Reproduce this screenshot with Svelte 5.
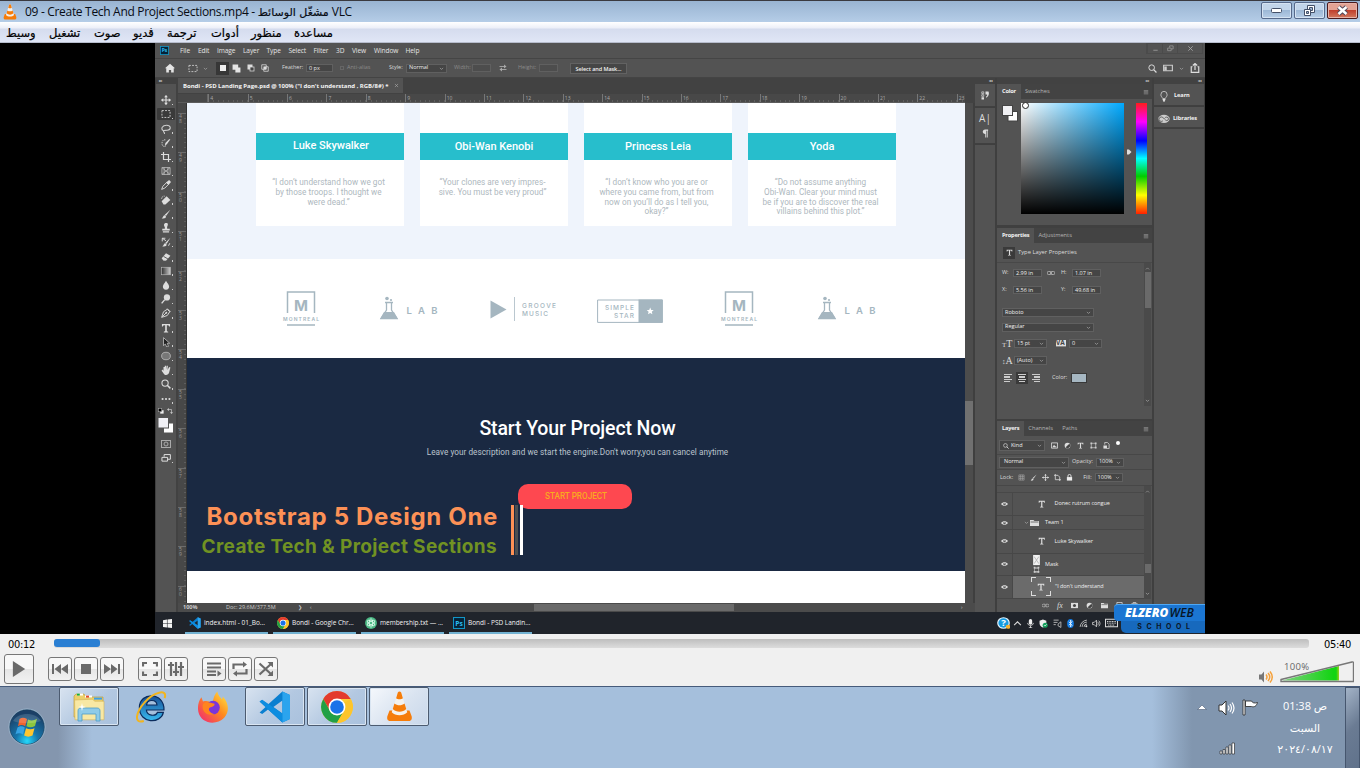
<script>
  const menus = ['وسيط', 'تشغيل', 'صوت', 'ڤديو', 'ترجمة', 'أدوات', 'منظور', 'مساعدة'];
  const menuWidths = [43, 45, 39, 34, 44, 40, 43, 40];

  const psMenu = [['File', 18], ['Edit', 19], ['Image', 26], ['Layer', 23.5], ['Type', 22], ['Select', 25], ['Filter', 22.5], ['3D', 16], ['View', 22], ['Window', 31.5], ['Help', 20]];

  const tools = ['move', 'marquee', 'lasso', 'quick', 'crop', 'frame', 'dropper', 'heal', 'brush', 'stamp', 'history', 'eraser', 'gradient', 'blur', 'dodge', 'pen', 'type', 'select', 'ellipse', 'hand', 'zoom', 'dots'];

  const team = [
    { name: 'Luke Skywalker', up: true, lines: ['“I don’t understand how we got', 'by those troops. I thought we', 'were dead.”'] },
    { name: 'Obi-Wan Kenobi', lines: ['“Your clones are very impres-', 'sive. You must be very proud”'] },
    { name: 'Princess Leia', lines: ['“I don’t know who you are or', 'where you came from, but from', 'now on you’ll do as I tell you,', 'okay?”'] },
    { name: 'Yoda', lines: ['“Do not assume anything', 'Obi-Wan. Clear your mind must', 'be if you are to discover the real', 'villains behind this plot.”'] }
  ];

  const logos = [['montreal', 96], ['lab', 111], ['groove', 107], ['star', 124], ['montreal', 96], ['lab', 66]];
  const hTicks = Array.from({ length: 20 }, (_, i) => i + 4);
  const vTicks = Array.from({ length: 13 }, (_, i) => String(i + 48));

  const layers = [
    { h: 23, icon: 'type', pad: 25, label: 'Donec rutrum congue' },
    { h: 14, icon: 'folder', pad: 11, label: 'Team 1', group: true },
    { h: 23.5, icon: 'type', pad: 25, label: 'Luke Skywalker' },
    { h: 22.5, icon: 'mask', pad: 19, label: 'Mask' },
    { h: 22.5, icon: 'type', pad: 18, label: '"I don\'t understand', active: true }
  ];

  const psTasks = [['vscode', 'index.html - 01_Bo...'], ['chrome', 'Bondi - Google Chr...'], ['atom', 'membership.txt — ...'], ['ps', 'Bondi - PSD Landin...']];
  const tray = [['help', 15], ['up', 12], ['mic', 14], ['shield', 13], ['music', 14], ['bt', 13], ['wifi', 12], ['sound', 14], ['kbd', 17]];

  const dockItems = [['explorer', true], ['ie', false], ['firefox', false], ['vscode', true], ['chrome', true], ['cone', true]];
  const controls = [
    ['prev', 48], ['stop', 2], ['next', 2], ['full', 14], ['eq', 2], ['list', 14], ['loop', 2], ['shuffle', 2]
  ];

  // 16 x 16 glyphs
  const g = {
    move: '<path d="M8 1v14M1 8h14" stroke="#ddd" stroke-width="1.8"/><path d="M8 0l3 3.6H5zM8 16l3-3.6H5zM0 8l3.6-3v6zM16 8l-3.6-3v6z" fill="#ddd"/>',
    marquee: '<path d="M1.5 2.500h13v11h-13z" fill="none" stroke="#ccc" stroke-width="1.5" stroke-dasharray="3 2"/>',
    lasso: '<path d="M4 11C-1 8 2 2 9 2s8 7 1 8c-3 .6-6-.5-6 1.500S7 14 5 16" fill="none" stroke="#ccc" stroke-width="1.700"/>',
    quick: '<path d="M7 3c-5-1-6 4-5 8 1 3 4 3 6 2" fill="none" stroke="#ccc" stroke-width="1.500" stroke-dasharray="2 1.500"/><path d="M15 2l-5 7-4 4 1-5 6-6z" fill="#ddd"/>',
    crop: '<path d="M4 0v12h12M0 4h12v12" fill="none" stroke="#ddd" stroke-width="1.900"/>',
    frame: '<path d="M1.500 2.500h13v11h-13zM1.500 2.500l13 11M14.500 2.500l-13 11M5 2v12M11 2v12" fill="none" stroke="#bbb" stroke-width="1.300"/>',
    dropper: '<path d="M1 15l2-5 6-6 3 3-6 6z" fill="none" stroke="#ddd" stroke-width="1.500"/><path d="M8 4l5-4 3 3-4 5z" fill="#ddd"/>',
    heal: '<path d="M1 10l8-8 6 6-8 7H4z" fill="#ddd"/><path d="M1 6c0-3 3-5 5-4" fill="none" stroke="#ccc" stroke-dasharray="2 1" stroke-width="1.500"/>',
    brush: '<path d="M15 1L6 9l2 2zM6 10c-3 0-2 4-5 5 5 1 7-1 7-3z" fill="#ddd"/>',
    stamp: '<path d="M6 9C7 6 4 5 5 2s6-3 6 0-2 4-1 7h4v3H2V9zM3 13h10v2H3z" fill="#ddd"/>',
    history: '<path d="M15 1L7 9l2 2zM7 10c-3 0-2 4-5 5 5 1 7-1 7-3z" fill="#ddd"/><path d="M2 7V2h5M2 2l6 4M12 14l2-4" fill="none" stroke="#ddd" stroke-width="1.500"/>',
    eraser: '<path d="M1 10l7-8 7 4-7 8H4z" fill="#ddd"/><path d="M4 7l7 4M2 15h13" stroke="#555" stroke-width="1.500"/>',
    gradient: '<rect x="1" y="2" width="14" height="12" fill="url(#grayFade)" stroke="#bbb"/>',
    blur: '<path d="M8 1c2 4 5 6 5 9.500a5 5 0 01-10 0C3 7 6 5 8 1z" fill="#ddd"/>',
    dodge: '<circle cx="9.500" cy="5.500" r="5" fill="#ddd"/><path d="M6 9l-5 6" stroke="#ddd" stroke-width="2.200"/>',
    pen: '<path d="M1 15l3-9 6-4 4 4-4 6zM2 14l6-6M10 1l5 5" fill="none" stroke="#ddd" stroke-width="1.500"/><circle cx="8.500" cy="7.500" r="1.500" fill="#ddd"/>',
    type: '<path d="M1.500 1.500h13v4H13C12.700 3.600 12 3.500 9.300 3.500v9c0 1 .7 1.200 2.200 1.300v1.200h-7v-1.200c1.500-.1 2.200-.3 2.200-1.300v-9C4 3.500 3.300 3.600 3 5.500H1.500z" fill="#ddd"/>',
    select: '<path d="M4 1v13l3-3 2 5 3-1-2-5h4z" fill="#222" stroke="#bbb" stroke-width="1.300"/>',
    ellipse: '<ellipse cx="8" cy="8" rx="7" ry="6" fill="#777" stroke="#bbb" stroke-width="1.300"/>',
    hand: '<path d="M4 9V3h2v4V1h2v6l1-6h2l-.5 7L13 3l2 1-2 8c-1 5-8 5-9 1L1 9l1-2z" fill="#ddd"/>',
    zoom: '<circle cx="6.500" cy="6.500" r="5" fill="none" stroke="#ddd" stroke-width="1.700"/><path d="M10 10l5 5" stroke="#ddd" stroke-width="2.300"/>',
    dots: '<circle cx="2.500" cy="8" r="1.700" fill="#ddd"/><circle cx="8" cy="8" r="1.700" fill="#ddd"/><circle cx="13.500" cy="8" r="1.700" fill="#ddd"/>',
    home: '<path d="M8 1l8 7.500h-2V15H9.800v-4H6.200v4H2V8.500H0z" fill="#e4e4e4"/>',
    chev: '<path d="M3 6l5 5 5-5" fill="none" stroke="#bbb" stroke-width="1.900"/>',
    chevUp: '<path d="M3 11l5-5 5 5" fill="none" stroke="#aaa" stroke-width="1.900"/>',
    op1: '<rect x="2" y="2" width="12" height="12" fill="#eee"/>',
    op2: '<path d="M1 1h10v5h4v9H6v-5H1z" fill="#e4e4e4"/>',
    op3: '<path d="M1 1h10v5H6v5H1z" fill="#ddd"/><rect x="6" y="6" width="8" height="8" fill="#444" stroke="#ddd" stroke-width="1.500"/>',
    op4: '<path d="M1.500 1.500h9v9h-9zM5.500 5.500h9v9h-9z" fill="none" stroke="#ddd" stroke-width="1.500"/><rect x="6" y="6" width="4.500" height="4.500" fill="#ddd"/>',
    defaults: '<rect x="6" y="6" width="9" height="9" fill="#eee"/><rect x="1" y="1" width="9" height="9" fill="#000" stroke="#aaa" stroke-width="1.500"/>',
    turn: '<path d="M3 4h9v9" fill="none" stroke="#ccc" stroke-width="1.800"/><path d="M5 0v8L0 4zM8 11h8l-4 5z" fill="#ccc"/>',
    swap: '<path d="M1 5h10M15 11H5" stroke="#aaa" stroke-width="1.800"/><path d="M10 1l5 4-5 4zM6 7l-5 4 5 4z" fill="#aaa"/>',
    space: '<path d="M1 2.500h14v11H1z" fill="none" stroke="#ccc" stroke-width="1.800"/><rect x="2" y="5" width="4" height="8" fill="#ccc"/>',
    share: '<path d="M4 6H2v9h12V6h-2M8 11V1M4.500 4L8 .8 11.500 4" fill="none" stroke="#ddd" stroke-width="1.900"/>',
    min: '<path d="M3 12h10" stroke="#999" stroke-width="2"/>',
    restore: '<path d="M1.500 7h8v6h-8zM6 6V2h8v7h-4" fill="none" stroke="#999" stroke-width="1.800"/>',
    screens: '<path d="M1.500 7h9v6h-9zM5 6V2.500h10V10h-4" fill="none" stroke="#ddd" stroke-width="1.600"/>',
    close: '<path d="M3 3l10 10M13 3L3 13" stroke="#aaa" stroke-width="1.900"/>',
    histPanel: '<path d="M1.500 1.500h4v3h-4zM1.500 6.500h4v3h-4z" fill="none" stroke="#ccc" stroke-width="1.500"/><path d="M1 11h5v4H1zM9 1h6c2 5 0 9-5 11v-2c2-1 3-3 2-4H9z" fill="#ddd"/>',
    para: '<path d="M14 1v2h-1v12h-2V3H9.500v12h-2V9C0 9 0 1 7 1z" fill="#ddd"/>',
    bulb: '<path d="M6 11C5 9 3 8 3 5.500a5 5 0 0110 0C13 8 11 9 10 11z" fill="none" stroke="#ccc" stroke-width="1.300"/><path d="M5.500 11.500h5L9 15.500H7z" fill="#ddd"/>',
    cc: '<ellipse cx="8" cy="8.500" rx="7.600" ry="6" fill="#ccc"/><path d="M6.500 11.500a3.200 3.200 0 110-5c1.500 1 3 4 5 4.500a2.500 2.500 0 100-5c-1 0-2 .5-2.500 1.500" fill="none" stroke="#555" stroke-width="1.200"/>',
    panelMenu: '<path d="M2 4h12M2 7h12M2 10h12M2 13h12" stroke="#999" stroke-width="1.600"/>',
    link: '<path d="M7 5H3a3 3 0 000 6h4zM9 5h4a3 3 0 010 6H9z" fill="none" stroke="#bbb" stroke-width="1.600"/>',
    img: '<path d="M1 2h14v12H1z" fill="none" stroke="#ddd" stroke-width="1.900"/><path d="M3 12l4-6 3 4 1-1 2 3z" fill="#ddd"/>',
    adj: '<circle cx="8" cy="8" r="6.500" fill="#ddd"/><path d="M8 2a6 6 0 010 12z" fill="#444" transform="rotate(45 8 8)"/>',
    shape: '<path d="M3 3h10v10H3z" fill="none" stroke="#ccc" stroke-width="1.500"/><path d="M1 1h4v4H1zM11 1h4v4h-4zM1 11h4v4H1zM11 11h4v4h-4z" fill="#ccc"/>',
    smart: '<path d="M4 6V1h6l4 4v10H8" fill="none" stroke="#ddd" stroke-width="1.700"/><rect x="1" y="8" width="8" height="7" fill="#ddd"/>',
    checker: '<path d="M2 2h12v12H2zM2 6h12M2 10h12M6 2v12M10 2v12" fill="none" stroke="#aaa" stroke-width="1.300"/>',
    art: '<path d="M3 0v13h13M0 3h9l4 4v9" fill="none" stroke="#ddd" stroke-width="1.800"/>',
    lock: '<rect x="2" y="7" width="12" height="8" fill="#eee"/><path d="M4.500 7V4.500a3.500 3.500 0 017 0V7" fill="none" stroke="#eee" stroke-width="2"/>',
    eye: '<path d="M0 8c4-6.500 12-6.500 16 0-4 6.500-12 6.500-16 0z" fill="#ddd"/><circle cx="8" cy="8" r="3" fill="#535353"/><circle cx="8" cy="7.500" r="1.200" fill="#ddd"/>',
    folder: '<path d="M0 2h6l2 2h8v10H0z" fill="#ddd"/><path d="M1 6h14" stroke="#555" stroke-width="1.500"/>',
    mask: '<path d="M2 0h12v9H2z" fill="#f2f2f2"/><path d="M4 1.500l8 6M12 1.500l-8 6" stroke="#bbb"/><path d="M4.500 11.500h7v3.500h-7z" fill="none" stroke="#ccc"/><path d="M3 10.500h3v1.500H3zM10 10.500h3v1.500h-3zM3 14.300h3v1.500H3zM10 14.300h3v1.500h-3z" fill="#ccc"/>',
    maskBtn: '<rect x="0" y="2" width="16" height="12" fill="#ddd"/><circle cx="8" cy="8" r="3.500" fill="#444"/>',
    newL: '<path d="M2 1h12v13H2z" fill="none" stroke="#ddd" stroke-width="1.800"/>',
    trash: '<path d="M1 4h14M5 3V1h6v2M3 5l1 10h8l1-10" fill="none" stroke="#ddd" stroke-width="1.800"/>',
    win: '<path d="M0 2l7-1v6.500H0zM8 .9L16 0v7.500H8zM0 8.500h7V15l-7-1zM8 8.500h8V16l-8-1z" fill="#f4f4f4"/>',
    vscode: '<path d="M11.700.3L15.500 2v12l-3.800 1.700L4.500 9.200 1.600 11.500.3 10.800 3.300 8 .3 5.200l1.300-.7 2.900 2.300zM11.700 4.800L7.200 8l4.500 3.200z" fill="#0a7fd0" fill-rule="evenodd"/><path d="M.3 5.200l1.300-.8L11.700 11.300V15.700L.3 5.200z" fill="#0d8de0"/><path d="M11.700.3L15.500 2v12l-3.800 1.700z" fill="#2ba4ee"/>',
    chrome: '<circle cx="8" cy="8" r="7.900" fill="#fc3"/><path d="M1.150 4.050A7.900 7.900 0 0114.850 4H8a4 4 0 00-3.460 6z" fill="#e33b2e"/><path d="M1.150 4.050A7.900 7.900 0 008 15.900L11.460 10 8 12a4 4 0 01-3.460-2z" fill="#22a045"/><path d="M8 15.900L11.460 10A4 4 0 0011.460 6L14.850 4A7.900 7.900 0 018 15.900z" fill="#fdc52c"/><circle cx="8" cy="8" r="4.200" fill="#fff"/><circle cx="8" cy="8" r="3.400" fill="#1a73e8"/>',
    cone: '<path d="M.8 13l1.300-3h11.800l1.300 3c.5 2-.8 2.500-2 2.500H2.800c-1.200 0-2.500-.5-2-2.500z" fill="#f57c0a"/><path d="M3.400 11L7 .8C7.500 0 8.500 0 9 .8L12.600 11c-2 2-7.200 2-9.200 0z" fill="#f4f1ec"/><path d="M6 3.700L7 .8C7.500 0 8.500 0 9 .8l1 2.900c-1 .8-3 .8-4 0zM5 6.400c1.700 1.200 4.300 1.200 6 0l1 2.900c-2.100 1.800-5.900 1.800-8 0z" fill="#f57c0a"/>',
    atom: '<circle cx="8" cy="8" r="7.900" fill="#4bb985"/><g fill="none" stroke="#e6fff2" stroke-width="1"><ellipse cx="8" cy="8" rx="2.300" ry="5.800"/><ellipse cx="8" cy="8" rx="2.300" ry="5.800" transform="rotate(60 8 8)"/><ellipse cx="8" cy="8" rx="2.300" ry="5.800" transform="rotate(-60 8 8)"/></g>',
    ps: '<rect x=".7" y=".7" width="14.600" height="14.600" fill="#062236" stroke="#1395c6" stroke-width="1.400"/><text x="8" y="11.500" font-family="Open Sans, sans-serif" font-weight="700" font-size="9" fill="#2bbcf2" text-anchor="middle">Ps</text>',
    help: '<circle cx="8" cy="8" r="7.800" fill="#e8f6ff"/><circle cx="8" cy="8" r="6.300" fill="#169be2"/><text x="8" y="12.500" font-family="Open Sans, sans-serif" font-weight="700" font-size="12" fill="#fff" text-anchor="middle">?</text><circle cx="13.500" cy="13" r="2.800" fill="#f8b230"/>',
    up: '<path d="M2 11l6-6 6 6" fill="none" stroke="#ddd" stroke-width="1.800"/>',
    mic: '<rect x="5" y="0" width="6" height="10" rx="3" fill="#eee"/><path d="M3 7c0 6 10 6 10 0M8 12v4M5 15.500h6" fill="none" stroke="#ddd" stroke-width="1.500"/>',
    shield: '<path d="M7 1l6 2v5c0 4-3 6-6 7-3-1-6-3-6-7V3z" fill="#eee"/><circle cx="11" cy="11" r="4.500" fill="#12a05c"/><path d="M9 11l1.500 1.500L13.500 9.500" stroke="#fff" fill="none" stroke-width="1.300"/>',
    music: '<path d="M1 2h9M1 6h7M1 10h4M9 9l5-4v10l-5-3z" fill="none" stroke="#bbb" stroke-width="1.600"/>',
    bt: '<ellipse cx="8" cy="8" rx="6" ry="8" fill="#1279e0"/><path d="M5 5l6 6-3 3V2l3 3-6 6" fill="none" stroke="#fff" stroke-width="1.300"/>',
    wifi: '<path d="M2 14A13 13 0 0114 2M5.500 14A9 9 0 0114 5.500M9 14a5 5 0 015-5" fill="none" stroke="#bbb" stroke-width="1.700"/><circle cx="13" cy="13" r="1.800" fill="#ddd"/>',
    sound: '<path d="M1 6h3l4-4v12l-4-4H1zM10 5c1.500 2 1.500 4 0 6M12 3c3 3 3 7 0 10" fill="none" stroke="#ccc" stroke-width="1.500"/>',
    kbd: '<path d="M.5 3h15v10H.5z" fill="none" stroke="#ddd" stroke-width="1.400"/><path d="M2.500 6h11M2.500 8.200h11M4 10.800h8" stroke="#ddd" stroke-width="1.200" stroke-dasharray="1.300 .7"/>',
    play: '<path d="M1 0l14 8-14 8z" fill="#6a6a6a"/>',
    prev: '<path d="M0 3h2v10H0zM9 3v10L2.500 8zM16 3v10L9 8z" fill="#6a6a6a"/>',
    next: '<path d="M14 3h2v10h-2zM7 3v10l6.500-5zM0 3v10l7-5z" fill="#6a6a6a"/>',
    stop: '<path d="M3 3h10v10H3z" fill="#6a6a6a"/>',
    full: '<path d="M1 5.500V2h4M11 2h4v3.500M15 10.500V14h-4M5 14H1v-3.500" fill="none" stroke="#6a6a6a" stroke-width="2.200"/>',
    eq: '<path d="M3 1v14M8 1v14M13 1v14" stroke="#6a6a6a" stroke-width="2.200"/><path d="M0 4h6M5 11h6M10 6h6" stroke="#6a6a6a" stroke-width="2.200"/>',
    list: '<path d="M1 2.500h14M1 6.500h14M1 10.500h9M1 14h9" stroke="#6a6a6a" stroke-width="2"/><path d="M11.500 9.500l4 3-4 3z" fill="#6a6a6a"/>',
    loop: '<path d="M1.500 8V3.500h10M14.500 8v4.500h-10" fill="none" stroke="#6a6a6a" stroke-width="2.200"/><path d="M11 .5l4 3-4 3zM5 9.500l-4 3 4 3z" fill="#6a6a6a"/>',
    shuffle: '<path d="M1.500 2.500l12 11M1.500 13.500l12-11" stroke="#6a6a6a" stroke-width="2.200"/><path d="M9.500 1H15v5.500zM9.500 15H15V9.500z" fill="#6a6a6a"/>',
    explorer: '<path d="M.5 2.500l1-1h4l1 1.500H15v10H.5z" fill="#ecd06c" stroke="#b99431" stroke-width=".3"/><path d="M2 1.300h3v1H2zM6 2.300h3.500v1H6z" fill="#fff"/><path d="M2 1.300h1.400v1H2z" fill="#16ab39"/><path d="M6.500 2.300h1.500v1H6.500z" fill="#e44e2b"/><path d="M10.500 3.300h4v1h-4z" fill="#3c9fe8"/><path d="M.8 4.500l9-.4 1 1H15.500v9.300H1z" fill="#f8e8a4" stroke="#d2b257" stroke-width=".3"/><path d="M2.500 15V10c0-1 .5-1.500 1.500-1.500h8c1 0 1.500.5 1.500 1.500v5h-2v-3.500h-7V15z" fill="#8fcbe8" stroke="#4d9cc8" stroke-width=".4"/><path d="M4.500 6l.4 1.600 1.600.4-1.600.4-.4 1.600-.4-1.600L2.500 8l1.600-.4z" fill="#fff"/>',
    ie: '<path d="M14.500 9.500H5.700c.2 3 4.600 3.400 5.500 1.200h3C13 16.500 2.200 16.600 2.200 8.300 2.200.2 14.800.3 14.500 9.500zM5.800 7h5.200C10.800 4 6 4 5.800 7z" fill="url(#ieBlue)" stroke="#0b2b5c" stroke-width=".6"/><path d="M14.800 3.600C16.600-1.500 9 .6 4.700 5.800.7 10.300-1 16.600 4.400 15" fill="none" stroke="#f2b51f" stroke-width="1"/>',
    firefox: '<path d="M10.200.2c.3 2.200 1.500 2.700 2.200 4 .3-.5.500-1 .5-1.500 3 3 3.500 7.800.7 10.700C9.500 17.500 2 16.300.7 10.500.1 7.600.8 5 2.200 3.100L3 5.200C4.800 4.700 6.300 5 7.300 6c1-.2.500-3.500 2.900-5.800z" fill="url(#fox)"/><circle cx="8" cy="8.300" r="3.400" fill="#7b35d9"/><path d="M3 6.500c2-1.700 3.700-.4 5.500-.2.800.2 0 1.700-1.700 1.800-1.600.3-1 2.800 2 3.500-4 1.300-6.800-1.800-5.800-5.100z" fill="#ff841f"/>'
  };
</script>

{#snippet icon(name, w, h = w)}
  <svg class="i" width={w} height={h} viewBox="0 0 16 16" preserveAspectRatio="none">{@html g[name]}</svg>
{/snippet}

{#snippet drop(text, w)}
  <div class="drop" style:width="{w}px"><span>{text}</span>{@render icon('chev', 5)}</div>
{/snippet}

{#snippet logo(kind)}
  {#if kind === 'montreal'}
    <svg width="36" height="36" viewBox="0 0 36 36"><path d="M4.500 22V1h27v21M4 34h28" fill="none" stroke="#a5b6c0" stroke-width="1.500" /><text x="18" y="19.500" class="mont" font-size="15" font-weight="700" text-anchor="middle">M</text><text x="0" y="29.500" class="mont" font-size="5" font-weight="600" textLength="36">MONTREAL</text></svg>
  {:else if kind === 'lab'}
    <svg width="60" height="36" viewBox="0 0 60 36"><path d="M6 11.500h8M7.500 12v7L2 27.500h16L12.500 19v-7" fill="none" stroke="#a5b6c0" stroke-width="1.300" /><path d="M5 21h10l4 7H1z" fill="#a5b6c0" /><circle cx="8" cy="7.500" r="1.800" fill="#a5b6c0" /><circle cx="12" cy="9" r="1.100" fill="#a5b6c0" /><text x="27.500" y="22.500" class="mont" font-size="9.500" font-weight="600" textLength="31">LAB</text></svg>
  {:else if kind === 'groove'}
    <svg width="68" height="36" viewBox="0 0 68 36"><path d="M.5 9.500l16 9-16 9z" fill="#a5b6c0" /><path d="M24.500 6v24" stroke="#bac7cf" /><text x="32" y="17" class="mont" font-size="6.500" font-weight="500" textLength="34">GROOVE</text><text x="32" y="25" class="mont" font-size="6.500" font-weight="500" textLength="26">MUSIC</text></svg>
  {:else}
    <svg width="67" height="36" viewBox="0 0 67 36"><path d="M.6 9h64.800v22.400H.6z" fill="none" stroke="#a5b6c0" /><path d="M41.500 8.500h24v23.300h-24z" fill="#a5b6c0" /><path d="M53.200 16.600l1 2.300 2.500.2-1.900 1.600.6 2.500-2.200-1.300-2.200 1.300.6-2.500-1.900-1.600 2.500-.2z" fill="#fff" /><text x="8" y="19" class="mont" font-size="6.500" font-weight="500" textLength="29">SIMPLE</text><text x="17" y="26.500" class="mont" font-size="6.500" font-weight="500" textLength="20">STAR</text></svg>
  {/if}
{/snippet}

<svg class="defs" width="0" height="0">
  <defs>
    <linearGradient id="grayFade"><stop stop-color="#333" /><stop offset="1" stop-color="#ccc" /></linearGradient>
    <linearGradient id="ieBlue" x2="0" y2="1"><stop stop-color="#174f96" /><stop offset="1" stop-color="#39baf0" /></linearGradient>
    <linearGradient id="fox" x1="1" x2="0" y2="1"><stop stop-color="#fff04a" /><stop offset=".45" stop-color="#ff8a1e" /><stop offset="1" stop-color="#f0207a" /></linearGradient>
    <linearGradient id="vol"><stop stop-color="#7fd07f" /><stop offset=".9" stop-color="#12d412" /><stop offset=".95" stop-color="#12d412" /><stop offset="1" stop-color="#9fce20" /></linearGradient>
    <radialGradient id="orb" cx=".5" cy=".9" r=".8"><stop stop-color="#25d9fb" /><stop offset=".4" stop-color="#1676ac" /><stop offset="1" stop-color="#1b3f66" /></radialGradient>
  </defs>
</svg>

<div class="screen">
  <header class="title">
    {@render icon('cone', 14, 16)}
    <span class="caption">09 - Create Tech And Project Sections.mp4 - <b>مشغّل الوسائط</b> VLC</span>
    <div class="winbtns">
      <i><svg width="12" height="6"><rect x=".5" y=".5" width="10" height="4" rx="1" fill="#fff" stroke="#445068" /></svg></i>
      <i><svg width="14" height="12"><path d="M4.500.5h7v7h-7z" fill="#fff" stroke="#445068" /><path d="M6.500 2.500h3v3h-3z" fill="#9fb6d2" stroke="#445068" /><path d="M1.500 4.500h6v6h-6z" fill="#fff" stroke="#445068" /><path d="M3.500 6.500h2v2h-2z" fill="#9fb6d2" stroke="#445068" /></svg></i>
      <i class="x"><svg width="13" height="11" viewBox="0 0 13 11"><path d="M2.500 2l8 7M10.500 2l-8 7" stroke="#50495b" stroke-width="4.500" /><path d="M2.500 2l8 7M10.500 2l-8 7" stroke="#fff" stroke-width="2.500" /></svg></i>
    </div>
  </header>
  <nav class="menubar">
    {#each menus as m, i}<span style:width="{menuWidths[i]}px">{m}</span>{/each}
  </nav>

  <main class="video">
    <div class="ps">
      <div class="psmenu">
        <div class="pslogo">{@render icon('ps', 9)}</div>
        {#each psMenu as [t, w]}<span style:width="{w}px">{t}</span>{/each}
        <div class="pswin"><i>{@render icon('min', 7)}</i><i>{@render icon('restore', 7)}</i><i>{@render icon('close', 7)}</i></div>
      </div>
      <div class="options">
        <div class="o home">{@render icon('home', 10)}</div>
        <div class="o mq">{@render icon('marquee', 10, 9)}{@render icon('chev', 5)}</div>
        <div class="ops"><i class="on">{@render icon('op1', 8)}</i><i>{@render icon('op2', 9)}</i><i>{@render icon('op3', 8)}</i><i>{@render icon('op4', 8)}</i></div>
        <span class="lbl" style="width:24px">Feather:</span><span class="field" style="width:27px">0 px</span>
        <span class="dim aa"><i></i>Anti-alias</span>
        <span class="lbl" style="width:17px">Style:</span>{@render drop('Normal', 41)}
        <span class="dim w">Width:</span><span class="field off"></span>
        <div class="sw">{@render icon('swap', 8)}</div>
        <span class="dim h">Height:</span><span class="field off"></span>
        <span class="mask">Select and Mask...</span>
        <div class="oright">{@render icon('zoom', 9)}{@render icon('space', 10, 8)}{@render icon('chev', 5)}{@render icon('share', 10)}</div>
      </div>

      <div class="work">
        <div class="tools">
          <div class="strip">▸▸</div>
          <div class="grip"></div>
          {#each tools as t}<div class="tool" class:on={t === 'marquee'}>{@render icon(t, 10)}<u></u></div>{/each}
          <div class="mini">{@render icon('defaults', 6)}{@render icon('turn', 6)}</div>
          <svg width="21" height="18"><rect x="7.500" y="6" width="10" height="10" fill="#fff" stroke="#555" /><rect x="2" y=".5" width="10.500" height="10.500" fill="#f1f1f6" stroke="#555" /></svg>
          <div class="tool qm"><svg width="11" height="9"><rect x=".5" y=".5" width="9" height="7" fill="none" stroke="#aaa" /><circle cx="5" cy="4" r="2" fill="none" stroke="#aaa" /></svg></div>
          <div class="tool">{@render icon('screens', 10)}<u></u></div>
        </div>

        <div class="doc">
          <div class="tabs"><div class="tab"><b>Bondi - PSD Landing Page.psd @ 100% ("I don't understand , RGB/8#) *</b>{@render icon('close', 5)}</div></div>
          <div class="hruler"><i></i>{#each hTicks as n}<span>{n}</span>{/each}</div>
          <div class="mid">
            <div class="vruler">{#each vTicks as n}<span>{n[0]}<br />{n[1]}</span>{/each}</div>
            <div class="canvas">
              <section class="team">
                {#each team as p}
                  <article><h4 class:up={p.up}>{p.name}</h4><p>{#each p.lines as l}<span>{l}</span>{/each}</p></article>
                {/each}
              </section>
              <section class="logos">{#each logos as [k, w]}<div style:width="{w}px">{@render logo(k)}</div>{/each}</section>
              <section class="cta">
                <h2>Start Your Project Now</h2>
                <p>Leave your description and we start the engine.Don't worry,you can cancel anytime</p>
                <button>START PROJECT</button>
              </section>
              <div class="lower">
                <div><strong>Bootstrap 5 Design One</strong><em>Create Tech &amp; Project Sections</em></div>
                <i class="b1"></i><i class="b2"></i><i class="b3"></i>
              </div>
            </div>
            <div class="vscroll"><i></i></div>
          </div>
          <div class="status"><b>100%</b><span>Doc: 29.6M/377.5M</span><small>❯</small><small class="prev">‹</small><i></i><small class="next">›</small></div>
        </div>

        <div class="dock narrow">
          <div class="strip">◂◂</div>
          <div class="blk" style="height:23px">{@render icon('histPanel', 8, 9)}</div>
          <div class="blk two" style="height:36px"><b>A|</b>{@render icon('para', 7, 9)}</div>
          <div class="rest"></div>
        </div>

        <div class="dock panels">
          <div class="strip">▸▸</div>
          <div class="ptabs"><b>Color</b><span style="width:35px">Swatches</span>{@render icon('panelMenu', 6)}</div>
          <div class="color">
            <svg width="17" height="18"><rect x="6" y="6.500" width="9.500" height="9.500" fill="#fff" stroke="#444" /><rect x=".5" y=".5" width="10" height="10" fill="#f1f1f4" stroke="#444" /></svg>
            <div class="picker"><i></i></div>
            <svg class="arrow" width="5" height="6"><path d="M0 .5h2L4.500 3 2 5.500H0z" fill="#ddd" /></svg>
            <div class="hue"></div>
          </div>
          <div class="ptabs"><b>Properties</b><span style="width:42px">Adjustments</span>{@render icon('panelMenu', 6)}</div>
          <div class="props">
            <div class="ptitle"><i>{@render icon('type', 7)}</i>Type Layer Properties</div>
            <div class="pbody">
              <div class="pform">
                <div class="r"><label>W:</label><span class="field">2.99 in</span>{@render icon('link', 8)}<label>H:</label><span class="field">1.07 in</span></div>
                <div class="r"><label>X:</label><span class="field">5.56 in</span><em></em><label>Y:</label><span class="field">49.68 in</span></div>
                <div class="r d1">{@render drop('Roboto', 92)}</div>
                <div class="r d2">{@render drop('Regular', 92)}</div>
                <div class="r s"><span class="tt"><small>T</small>T</span>{@render drop('15 pt', 33)}<span class="va">VA</span>{@render drop('0', 33)}</div>
                <div class="r s"><span class="tt"><small>↕</small>A</span>{@render drop('(Auto)', 33)}</div>
                <div class="r al">
                  {#each ['left', 'center', 'right'] as a}<i class={a}><u></u><u></u><u></u><u></u></i>{/each}
                  <span>Color:</span><b></b>
                </div>
              </div>
              <div class="pscroll">{@render icon('chevUp', 5)}<i></i>{@render icon('chev', 5)}</div>
            </div>
          </div>
          <div class="ptabs"><b>Layers</b><span style="width:34px">Channels</span><span style="width:24px">Paths</span>{@render icon('panelMenu', 6)}</div>
          <div class="layers">
            <div class="lr k"><div class="drop" style="width:46px">{@render icon('zoom', 6)}<span>Kind</span>{@render icon('chev', 5)}</div>{#each ['img', 'adj', 'type', 'shape', 'smart'] as n}{@render icon(n, 7)}{/each}<i class="dot"></i></div>
            <div class="lr n">{@render drop('Normal', 70)}<span>Opacity:</span>{@render drop('100%', 28)}</div>
            <div class="lr lk"><span>Lock:</span>{#each ['checker', 'brush', 'move', 'art', 'lock'] as n}{@render icon(n, 7)}{/each}<span class="fill">Fill:</span>{@render drop('100%', 28)}</div>
            <div class="list">
              <div class="rows">
                <div class="sliver"></div>
                {#each layers as l}
                  <div class="layer" class:active={l.active} style:height="{l.h}px">
                    <div class="eye">{@render icon('eye', 7, 6)}</div>
                    <div class="lc" style:padding-left="{l.pad}px">
                      {#if l.group}{@render icon('chev', 5)}{/if}
                      {#if l.active}<span class="brk">{@render icon('type', 8)}</span>
                      {:else}{@render icon(l.icon, l.icon === 'type' ? 7.5 : 9, l.icon === 'mask' ? 18 : 8)}{/if}
                      <span class="nm" class:wide={l.icon === 'type' && !l.active} class:nr={l.group}>{l.label}</span>
                    </div>
                  </div>
                {/each}
              </div>
              <div class="pscroll ls">{@render icon('chevUp', 5)}<i></i>{@render icon('chev', 5)}</div>
            </div>
            <div class="foot">{@render icon('link', 7)}<em>fx</em>{#each ['maskBtn', 'adj', 'folder', 'newL', 'trash'] as n}{@render icon(n, 7)}{/each}</div>
          </div>
        </div>

        <div class="dock learn">
          <div class="strip">◂◂</div>
          <div class="blk" style="height:22px">{@render icon('bulb', 10, 11)}<b>Learn</b></div>
          <div class="blk lib" style="height:21px">{@render icon('cc', 12, 11)}<b>Libraries</b></div>
          <div class="rest"></div>
        </div>
      </div>

      <div class="w10">
        <div class="start">{@render icon('win', 9)}</div>
        {#each psTasks as [ic, t]}<div class="task">{@render icon(ic, 12)}<span>{t}</span></div>{/each}
        <div class="tray">{#each tray as [n, w]}<i style:width="{w}px">{@render icon(n, n === 'help' || n === 'kbd' ? 13 : 9, n === 'help' || n === 'kbd' ? 12 : 9)}</i>{/each}</div>
      </div>
      <div class="brand"><div class="top"><b>ELZERO</b><b class="k">WEB</b></div><div class="bot">SCHOOL</div></div>
    </div>
  </main>

  <div class="controls">
    <div class="seek"><span>00:12</span><div class="bar"><i></i></div><span class="end">05:40</span></div>
    <div class="btns">
      <div class="btn big">{@render icon('play', 14, 16)}</div>
      {#each controls as [n, gap], k}<div class="btn" style:margin-left="{k === 0 ? 14 : gap}px">{@render icon(n, 16)}</div>{/each}
      <div class="volume">
        <svg width="15" height="14" viewBox="0 0 15 14"><path d="M0 4.500h2.500L5 1.500v11L2.500 9.500H0z" fill="#777" /><path d="M7 4.500q2 2.500 0 5M9 3q3.500 4 0 8M11 1.500q4.500 5.500 0 11" fill="none" stroke="#f5a13b" stroke-width="1.500" /></svg>
        <svg width="74" height="26" viewBox="0 0 74 26"><path d="M2 22.500L59 8v14.500z" fill="url(#vol)" /><path d="M1 21.500L72 4c1-.2 1.500 0 1.500 1v18.500H1z" fill="none" stroke="#777" stroke-width="1.400" /><text x="4" y="11.500" font-family="Open Sans, sans-serif" font-size="9.500" fill="#666" textLength="25">100%</text></svg>
      </div>
    </div>
  </div>

  <footer class="taskbar">
    <svg class="orb" width="38" height="38" viewBox="0 0 38 38"><circle cx="19" cy="19" r="17.500" fill="url(#orb)" stroke="#20435f" /><circle cx="19" cy="19" r="18" fill="none" stroke="#a9c6dc" stroke-width=".7" /><path d="M11.500 11c2.500-2 5-1.500 7.500 0l-1.800 7.200c-2.500-1.500-4.700-1.500-7.200 0z" fill="#f0622d" /><path d="M20 11.500c3 1.300 5.500 1.300 9-.8L27 18c-3 1.800-6 1.700-8.500.3z" fill="#8cc63f" /><path d="M9.500 19.500c3-2 5-1.300 7.300 0L15 26.500c-2.500-1.500-5-1.500-7.500-.3z" fill="#36a3e4" /><path d="M18 20.200c3 1.300 5.500 1.300 8.500 0L24.500 27.500c-3 1.500-5.700 1.500-8.400 0z" fill="#fdc62f" /><path d="M5 13C10 3.500 28 3.500 33 13c-8 3-20 3-28 0z" fill="#fff" opacity=".14" /></svg>
    <div class="apps">
      {#each dockItems as [n, open]}<div class="app" class:open>{@render icon(n, n === 'cone' ? 27 : 32, n === 'cone' ? 31 : 32)}</div>{/each}
    </div>
    <div class="notif">
      <div class="nrow">
        <svg width="10" height="7"><path d="M.5 5.500L5 1l4.500 4.500z" fill="#fff" stroke="#4b5c75" stroke-width=".6" /></svg>
        <svg width="17" height="16" viewBox="0 0 17 16"><path d="M1 5h3l4-4v14l-4-4H1z" fill="#fff" stroke="#333" /><path d="M10 5.500q2 2.500 0 5M12 4q3 4 0 8M14 2.500q4 5.500 0 11" fill="none" stroke="#fff" stroke-width="1.200" /></svg>
        <svg width="17" height="17" viewBox="0 0 17 17"><path d="M1 1h2v15H1zM3.500 2h6c1 2 3 2.500 6 1.500-1 3.500-3 5-6 4h-6z" fill="#fff" stroke="#333" stroke-width=".9" /></svg>
      </div>
      <svg class="sig" width="17" height="13"><path d="M1 9h2v3H1zM4 7.500h2V12H4zM7 5h2v7H7zM10 3h2v9h-2zM13 1h2.500v11H13z" fill="#fff" stroke="#333" stroke-width=".7" /></svg>
    </div>
    <div class="clock"><span>01:38 ص</span><span>السبت</span><span class="date">٢٠٢٤/٠٨/١٧</span></div>
    <div class="peek"></div>
  </footer>
</div>

<style>
  :global(body) { margin: 0; overflow: hidden; }
  * { box-sizing: border-box; }
  i, em { font-style: normal; }
  .i { display: block; flex: none; }
  .defs { position: absolute; }
  .screen { width: 1360px; height: 768px; display: flex; flex-direction: column; overflow: hidden; background: #000; font-family: "Open Sans", "DejaVu Sans", sans-serif; white-space: nowrap; }

  .title { height: 22px; flex: none; display: flex; align-items: center; padding-left: 3px; border-top: 1px solid #3a3a40; background: linear-gradient(#99b4d2, #b5cde7); }
  .caption { margin-left: 8px; font-size: 12px; letter-spacing: -.31px; color: #080c14; line-height: 20px; }
  .caption b { font: 400 11px "DejaVu Sans", sans-serif; letter-spacing: -.1px; -webkit-text-stroke: .2px #080c14; }
  .winbtns { margin-left: auto; display: flex; gap: 2px; padding-right: 2px; align-self: flex-start; padding-top: 1px; }
  .winbtns i { width: 31px; height: 17px; border: 1px solid #56698a; border-radius: 2px; background: linear-gradient(#c2d5ea 0 48%, #9db8d6 50%, #b6cde6); box-shadow: inset 0 0 0 1px #d5e3f2; display: flex; align-items: center; justify-content: center; }
  .winbtns .x { border-color: #4b1a1c; background: linear-gradient(#e3a394 0 45%, #c1402d 50%, #d2795f); box-shadow: inset 0 0 0 1px #e7b3a8; }
  .menubar { height: 21px; flex: none; display: flex; align-items: center; padding: 2px 0 0 6px; background: linear-gradient(#fff 0, #eceff8 6px, #d5dcee 7px, #e0e6f6); border-bottom: 1px solid #b6bccc; font: 11.5px "DejaVu Sans", sans-serif; letter-spacing: -.3px; line-height: 18px; color: #000; -webkit-text-stroke: .2px #000; }
  .menubar span { display: block; }

  .video { height: 591px; flex: none; background: #000; padding-left: 155px; }
  .ps { position: relative; width: 1050px; height: 591px; display: flex; flex-direction: column; background: #424242; color: #ddd; font-size: 5.500px; line-height: 1; }
  .psmenu { height: 16px; flex: none; display: flex; align-items: center; background: #535353; border-bottom: 1px solid #454545; font-size: 6.600px; letter-spacing: -.1px; color: #e4e4e4; }
  .psmenu span { line-height: 14px; }
  .pslogo { width: 25px; padding-left: 5px; }
  .pswin { margin-left: auto; display: flex; align-self: flex-start; height: 11px; border: 1px solid #4b4b4b; margin-right: 2px; }
  .pswin i { width: 15px; display: flex; justify-content: center; align-items: center; border-left: 1px solid #4b4b4b; }
  .pswin i:last-child { width: 25px; }
  .options { height: 19px; flex: none; display: flex; align-items: center; background: #535353; border-bottom: 1px solid #444; }
  .home { width: 33px; padding-left: 10px; }
  .mq { display: flex; align-items: center; gap: 5px; width: 28px; }
  .ops { display: flex; gap: 1px; width: 66px; }
  .ops i { width: 13px; height: 13px; display: flex; align-items: center; justify-content: center; }
  .ops .on { background: #373737; }
  .lbl { color: #d8d8d8; }
  .field { background: #454545; border: .5px solid #606060; height: 8px; line-height: 7px; padding-left: 2px; color: #f0f0f0; }
  .field.off { width: 19px; background: #4d4d4d; }
  .dim { color: #8a8a8a; }
  .aa { width: 49px; margin-left: 7px; display: flex; align-items: center; gap: 3px; }
  .aa i { width: 4px; height: 4px; border: .5px solid #666; }
  .dim.w { margin-left: 7px; width: 18px; }
  .sw { width: 27px; padding-left: 8px; }
  .dim.h { width: 21px; }
  .mask { margin-left: 12px; width: 57px; height: 11px; line-height: 10px; text-align: center; background: #464646; border: .5px solid #626262; color: #f2f2f2; font-weight: 600; font-size: 5.500px; letter-spacing: -.08px; }
  .oright { margin-left: auto; display: flex; align-items: center; gap: 6px; padding-right: 5px; }
  .drop { height: 9px; background: #454545; border: .5px solid #606060; display: flex; align-items: center; padding: 0 2px; gap: 2px; color: #f0f0f0; flex: none; }
  .drop span { flex: 1; }

  .work { flex: 1; min-height: 0; display: flex; }
  .strip { height: 6px; flex: none; font-size: 4px; color: #ccc; background: #424242; padding: 1px 3px; letter-spacing: -.4px; }
  .tools { width: 21px; flex: none; background: #535353; border-left: 1px solid #3e3e3e; display: flex; flex-direction: column; }
  .grip { height: 9px; flex: none; }
  .tool { height: 14.220px; flex: none; display: flex; align-items: center; justify-content: center; position: relative; }
  .tool.on::before { content: ""; position: absolute; inset: 1px 1px; background: #3a3a3a; border-radius: 1px; }
  .tool .i { position: relative; }
  .tool u { position: absolute; right: 3px; bottom: 2px; width: 1.500px; height: 1.500px; background: #ccc; }
  .mini { height: 11px; flex: none; display: flex; align-items: center; justify-content: space-between; padding: 0 3px 0 2px; }
  .tools > svg { flex: none; display: block; }
  .tool.qm { height: 16px; padding-top: 3px; }

  .doc { width: 799px; flex: none; display: flex; flex-direction: column; background: #424242; padding-left: 2px; }
  .tabs { height: 16px; flex: none; }
  .tab { width: 225px; height: 15px; display: flex; align-items: center; gap: 5px; padding-left: 5px; background: #535353; font-size: 6px; color: #f4f4f4; }
  .tab b { width: 206px; font-weight: 700; letter-spacing: -.03px; }
  .hruler { height: 9px; margin-right: 10px; flex: none; display: flex; overflow: hidden; background: #484848; border-bottom: 1px solid #5c5c5c; color: #aaa; font-size: 5px; line-height: 8px; }
  .hruler i { width: 30.300px; flex: none; border-right: 1px solid #666; }
  .hruler span { width: 39.400px; flex: none; border-left: 1px solid #777; padding-left: 1px; background: repeating-linear-gradient(90deg, #484848 0 3.900px, #5e5e5e 3.900px 4.900px) 0 6px no-repeat; }
  .mid { height: 500px; flex: none; display: flex; }
  .vruler { width: 9px; flex: none; background: #484848; padding-top: 10px; overflow: hidden; font-size: 5px; line-height: 5px; color: #999; border-right: 1px solid #333; }
  .vruler span { display: block; height: 39.400px; border-top: 1px solid #6c6c6c; padding-left: 1px; background: repeating-linear-gradient(#484848 0 3.900px, #5e5e5e 3.900px 4.900px) 6px 0 no-repeat; }
  .canvas { width: 778px; flex: none; height: 500px; background: #fff; position: relative; font-family: Roboto, sans-serif; overflow: hidden; }
  .team { height: 156px; background: #eff4fc; display: grid; grid-template-columns: repeat(4, 148px); gap: 16px; padding-left: 69px; }
  article { height: 123px; background: #fff; padding-top: 30px; text-align: center; }
  h4 { margin: 0; height: 27px; background: #27becc; color: #fff; font-size: 11px; font-weight: 500; line-height: 27px; letter-spacing: -.02px; }
  h4.up { line-height: 25px; padding-left: 2px; }
  article p { margin: 18px 0 0; color: #aeb8be; font-size: 8.200px; line-height: 9.800px; letter-spacing: .02px; }
  article p span { display: block; margin-left: -3px; }
  .logos { height: 99px; display: flex; padding: 32px 0 0 96px; }
  .logos svg { display: block; overflow: visible; }
  .mont { font-family: Inter, sans-serif; fill: #a5b6c0; }
  .cta { height: 213px; background: #1a2942; color: #fff; text-align: center; padding: 59px 0 0 3px; display: flex; flex-direction: column; align-items: center; }
  h2 { margin: 0; font-size: 19.500px; font-weight: 500; line-height: 24px; letter-spacing: -.12px; }
  .cta p { margin: 5px 0 0; font-size: 8.200px; line-height: 12px; color: #bac4ce; letter-spacing: .04px; }
  button { margin: 26px 0 0 -5px; width: 114px; height: 25px; border: 0; border-radius: 10px; background: #fe4850; color: #f9a91f; font: 500 8.200px Roboto, sans-serif; padding: 0 0 2px 2px; }
  .lower { position: absolute; left: 15px; top: 402px; display: flex; }
  .lower div { width: 296px; display: flex; flex-direction: column; align-items: flex-end; margin-right: 12.500px; font-family: Inter, sans-serif; font-weight: 700; }
  .lower strong { font-size: 24px; font-weight: 700; line-height: 23px; letter-spacing: .68px; color: #fd9156; }
  .lower em { font-size: 19px; line-height: 20px; margin: 9px 0 0; letter-spacing: .34px; color: #719223; padding-right: 1px; }
  .lower i { width: 3px; height: 50px; margin-right: 1.600px; }
  .b1 { background: #fd9156; } .b2 { background: #4c4f51; } .b3 { background: #fff; }
  .vscroll { width: 10px; background: #4c4c4c; padding-top: 298px; border-right: 2px solid #3f3f3f; }
  .vscroll i { display: block; height: 64px; background: #707070; }
  .status { flex: 1; min-height: 0; display: flex; align-items: center; background: #4b4b4b; padding-left: 5px; color: #ccc; }
  .status b { width: 43px; } .status span { width: 72px; }
  .status small { font-size: 5px; width: 12px; line-height: 7px; }
  .status small.prev { width: 224px; } .status small.next { margin-left: auto; width: 14px; }
  .status i { width: 200px; height: 7px; background: #6a6a6a; }

  .dock { display: flex; flex-direction: column; flex: none; background: #3f3f3f; }
  .dock .strip { text-align: right; }
  .narrow { width: 22px; padding-right: 2px; }
  .blk { background: #535353; display: flex; align-items: center; justify-content: center; margin-bottom: 1px; border-bottom: 1px solid #404040; flex: none; }
  .two { flex-direction: column; gap: 5px; }
  .two b { font: 10px "Open Sans", sans-serif; line-height: 11px; }
  .rest { flex: 1; background: #535353; }
  .panels { width: 155px; }
  .ptabs { height: 15px; flex: none; display: flex; align-items: center; background: #434343; color: #b4b4b4; padding-right: 3px; font-size: 5.700px; }
  .ptabs b { color: #f2f2f2; background: #535353; padding: 0 5px; height: 15px; line-height: 15px; margin-right: 4px; letter-spacing: -.22px; }
  .ptabs .i { margin-left: auto; }
  .color { height: 129px; flex: none; background: #535353; border-bottom: 3px solid #404040; display: flex; padding: 4px 0 0 5px; }
  .color > svg { margin: 2px 2px 0 0; }
  .picker { width: 103px; height: 111px; background: linear-gradient(transparent, #000), linear-gradient(90deg, #fff, #00a9ff); }
  .picker i { display: block; width: 7px; height: 7px; margin: -1px 0 0 1px; border: 1px solid #222; border-radius: 50%; background: #fff; }
  .color > .arrow { margin: 46px 0 0 3px; }
  .hue { width: 11px; height: 111px; margin-left: 4px; background: linear-gradient(#ff1c1c, #f0f 17%, #00f 34%, #0ff 50%, #0c0 66%, #ff0 83%, #ff2000); }
  .props { height: 178px; flex: none; background: #535353; border-bottom: 2px solid #404040; }
  .ptitle { height: 20px; display: flex; align-items: center; padding-left: 6px; border-bottom: 1px solid #484848; gap: 3px; font-size: 5.800px; color: #ddd; }
  .ptitle i { width: 12px; height: 12px; background: #3a3a3a; display: flex; align-items: center; justify-content: center; }
  .pbody { display: flex; height: 143px; }
  .pform { width: 147px; }
  .r { height: 17px; display: flex; align-items: center; padding-left: 5px; }
  .r:first-child { margin-top: 1px; }
  .r label { width: 11px; } .r .field { width: 29px; }
  .r > .i { margin: 0 6px 0 5px; } .r em { width: 19px; }
  .d1 { margin-top: 6px; } .r.d2 { height: 12px; margin-top: 0; }
  .r.s { height: 17.500px; }
  .r.s:nth-child(5) { margin-top: 1.500px; }
  .tt { width: 12px; font: 10px "Liberation Serif", serif; } .tt small { font-size: 7px; }
  .va { margin: 0 3px 0 9px; width: 10px; font-size: 6.500px; font-weight: 700; background: #ddd; color: #444; border-bottom: 1px solid #888; }
  .r.al { gap: 2px; height: 17px; }
  .al i { width: 12px; height: 12px; padding: 2px; display: flex; flex-direction: column; gap: 1px; }
  .al u { height: 1.400px; width: 8px; background: #ccc; } .al u:nth-child(even) { width: 6px; }
  .al .center { background: #3a3a3a; align-items: center; } .al .right { align-items: flex-end; }
  .al span { margin-left: 8px; width: 17px; }
  .al b { width: 16px; height: 10px; background: #a6b7c2; border: 1px solid #383838; }
  .pscroll { width: 7px; background: #4a4a4a; display: flex; flex-direction: column; align-items: center; padding: 3px 0; }
  .pscroll i { width: 6px; height: 36px; margin: 1px 0 auto; background: #6a6a6a; }
  .layers { flex: 1; background: #535353; display: flex; flex-direction: column; }
  .lr { display: flex; align-items: center; border-bottom: 1px solid #474747; padding-left: 2px; flex: none; }
  .k { height: 19px; gap: 6px; padding-top: 1px; } .k .drop { height: 11px; padding-left: 3px; }
  .dot { width: 4px; height: 4px; border-radius: 50%; background: #fff; margin-top: -6px; }
  .n { height: 15px; gap: 3px; } .n .drop:first-child { height: 11px; padding-left: 4px; }
  .lk { height: 16px; gap: 5px; padding-left: 3px; } .lk .fill { margin-left: 5px; margin-right: -2px; }
  .list { height: 113px; flex: none; display: flex; }
  .rows { width: 147px; }
  .sliver { height: 7px; border-bottom: 1px solid #484848; }
  .layer { display: flex; border-bottom: 1px solid #474747; }
  .eye { width: 16px; display: flex; align-items: center; justify-content: center; border-right: 1px solid #484848; }
  .lc { flex: 1; display: flex; align-items: center; min-width: 0; }
  .active .lc { background: #6b6b6b; }
  .nm { margin-left: 4px; letter-spacing: -.05px; color: #eee; } .nm.wide { margin-left: 9px; } .nm.nr { margin-left: 6px; }
  .lc .i + .i { margin-left: 1px; }
  .brk { width: 20px; height: 19px; display: flex; align-items: center; justify-content: center; background: linear-gradient(#ddd, #ddd) 0 0/5px 1px, linear-gradient(#ddd, #ddd) 100% 0/5px 1px, linear-gradient(#ddd, #ddd) 0 100%/5px 1px, linear-gradient(#ddd, #ddd) 100% 100%/5px 1px, linear-gradient(#ddd, #ddd) 0 0/1px 5px, linear-gradient(#ddd, #ddd) 100% 0/1px 5px, linear-gradient(#ddd, #ddd) 0 100%/1px 5px, linear-gradient(#ddd, #ddd) 100% 100%/1px 5px; background-repeat: no-repeat; }
  .ls i { height: 9px; margin: auto 0 18px; }
  .foot { flex: 1; display: flex; align-items: center; gap: 8px; padding-left: 45px; }
  .foot em { font: italic 8px "Liberation Serif", serif; }
  .learn { width: 53px; padding: 0 1px 0 2px; }
  .learn .blk { justify-content: flex-start; padding: 3px 0 0 5px; gap: 5px; font-size: 5.700px; letter-spacing: -.12px; color: #f2f2f2; }
  .learn .lib { gap: 3px; padding-left: 4px; }

  .w10 { height: 22px; flex: none; background: #20242b; display: flex; }
  .start { width: 30px; padding: 7px 0 0 8px; }
  .task { width: 83px; margin-right: 5px; border-bottom: 2px solid #72b2d2; display: flex; align-items: center; gap: 3px; padding: 2px 0 0 4px; font-size: 6.500px; color: #f2f2f2; letter-spacing: -.02px; }
  .tray { margin-left: auto; padding-right: 85px; display: flex; align-items: center; }
  .tray i { display: flex; justify-content: center; }
  .brand { position: absolute; right: 0; top: 561px; width: 91px; text-align: center; }
  .brand .top { height: 17px; background: #1b76d2; border-radius: 4px 0 0 4px; border-top: 1px solid #50a8f3; font: italic 800 12px/16px "Open Sans", sans-serif; color: #fff; letter-spacing: .1px; }
  .brand b { font-weight: 800; } .brand .k { color: #071526; margin-left: 1px; font-weight: 600; }
  .brand .bot { margin-left: 7px; height: 12px; background: #1769bd; border-radius: 0 0 0 5px; color: #0b1727; font: 700 7px/11px Inter, sans-serif; letter-spacing: 4.600px; padding-left: 6px; }

  .controls { height: 52px; flex: none; background: #f0f0f0; padding-top: 4px; }
  .seek { height: 13px; display: flex; align-items: center; font: 11px "DejaVu Sans Condensed", "DejaVu Sans", sans-serif; letter-spacing: -.3px; color: #000; padding-left: 8px; }
  .seek span { width: 46px; line-height: 13px; } .seek .end { margin-left: 15px; width: 32px; }
  .bar { width: 1255px; flex: none; height: 9px; margin-top: -2px; border-radius: 3px; background: linear-gradient(#bebebe, #dcdcdc); }
  .bar i { display: block; width: 46px; height: 8px; border-radius: 3px; background: #2a7fd3; }
  .btns { display: flex; align-items: center; padding: 3px 6px 0 4px; }
  .btn { width: 24px; height: 24px; border: 1px solid #777; border-radius: 3px; background: linear-gradient(#f8f8f8 0 50%, #e6e6e6 51%, #f2f2f2); display: flex; align-items: center; justify-content: center; }
  .btn.big { width: 30px; height: 30px; }
  .volume { margin-left: auto; display: flex; align-items: flex-end; gap: 6px; padding-top: 3px; }
  .volume svg { display: block; }

  .taskbar { height: 82px; flex: none; display: flex; position: relative; border-top: 1px solid #465b7b; background: linear-gradient(90deg, #8496ae 0 58px, #a5bfdc 92px 1152px, #8196af 1192px); }
  .orb { margin: 21px 13px 0 8px; flex: none; }
  .apps { display: flex; gap: 2px; }
  .app { width: 60px; height: 39px; display: flex; align-items: center; justify-content: center; }
  .app.open { border: 1px solid #4c5b70; border-radius: 2px; background: linear-gradient(135deg, #d8e3f0, #b3c8e1 55%, #a9c1dd); box-shadow: inset 0 0 0 1px #d9e5f2; }
  .app:last-child { background: linear-gradient(135deg, #f5f8fc, #d9e3f0 55%, #c8d7ea); }
  .notif { margin-left: auto; width: 68px; padding-top: 12px; }
  .nrow { display: flex; align-items: center; gap: 10px; }
  .nrow svg + svg { margin-left: 1px; }
  .nrow svg + svg + svg { margin-left: -3px; }
  .sig { margin: 26px 0 0 22px; display: block; }
  .clock { width: 80px; display: flex; flex-direction: column; align-items: center; padding-top: 8px; color: #fff; font: 11px/21.500px "Open Sans", "DejaVu Sans", sans-serif; letter-spacing: -.2px; }
  .clock .date { font-size: 11px; letter-spacing: .1px; }
  .peek { width: 15px; border: 1px solid #46566e; border-bottom: 0; background: linear-gradient(135deg, #a3b3c7, #6a7b93 50%, #60728b); }
</style>
